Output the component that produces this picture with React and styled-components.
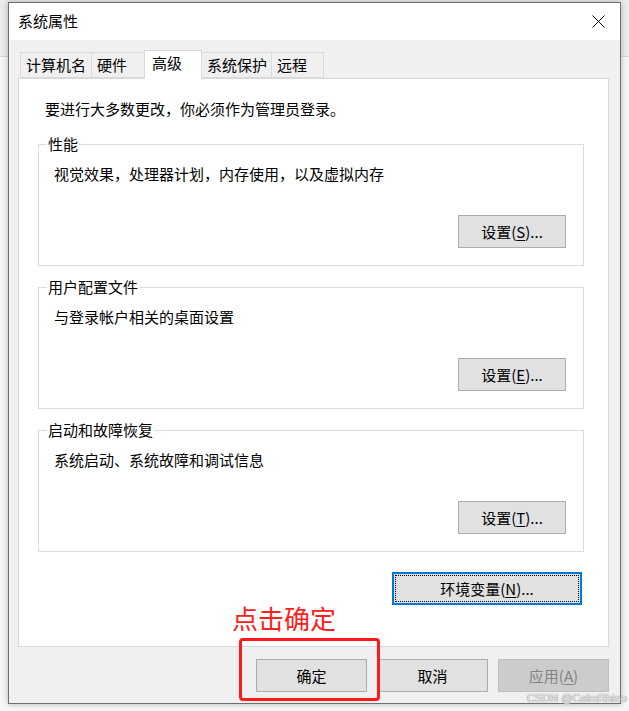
import React from "react";
import styled, { createGlobalStyle } from "styled-components";

const GlobalStyle = createGlobalStyle`
  html, body { margin: 0; padding: 0; }
  body {
    background: linear-gradient(#ececec 0, #ececec 56px, #d8d8d8 56px, #d8d8d8 57px, #f7f7f7 57px);
    font-family: "Noto Sans CJK SC", "Noto Sans", sans-serif;
    color: #000;
  }
`;

const Backdrop = styled.div`
  padding: 2px 8px 7px 8px;
  width: 629px;
  height: 711px;
  box-sizing: border-box;
  position: relative;
  overflow: hidden;
`;

const Window = styled.div`
  position: relative;
  width: 613px;
  height: 702px;
  box-sizing: border-box;
  border: 1px solid #6e6e6e;
  background: #f0f0f0;
  display: flex;
  flex-direction: column;
  box-shadow: 0 0 6px rgba(0, 0, 0, 0.28);
`;

const TitleBar = styled.div`
  height: 37px;
  background: #fff;
  display: flex;
  align-items: center;
  padding-left: 9px;
  flex-shrink: 0;
`;

const Title = styled.div`
  flex: 1;
  font-size: 15px;
  line-height: 20px;
  margin-top: -1px;
`;

const CloseButton = styled.div`
  width: 44px;
  height: 37px;
  display: flex;
  align-items: center;
  justify-content: center;
`;

const Body = styled.div`
  flex: 1;
  display: flex;
  flex-direction: column;
  padding: 10px 11px 0 9px;
`;

const TabStrip = styled.div`
  display: flex;
  align-items: flex-end;
  height: 28px;
  padding-left: 2px;
  position: relative;
  z-index: 2;
`;

const Tab = styled.div`
  box-sizing: border-box;
  width: ${(p) => p.$w}px;
  height: ${(p) => (p.$active ? 29 : 26)}px;
  margin-bottom: ${(p) => (p.$active ? -1 : 0)}px;
  margin-left: ${(p) => (p.$first ? 0 : -1)}px;
  border: 1px solid #d9d9d9;
  border-bottom: ${(p) => (p.$active ? "none" : "1px solid #d9d9d9")};
  background: ${(p) => (p.$active ? "#fff" : "#f0f0f0")};
  position: relative;
  z-index: ${(p) => (p.$active ? 2 : 1)};
  font-size: 15px;
  line-height: 20px;
  padding: ${(p) => (p.$active ? "2px 0 0 7px" : "2px 0 0 5px")};
  white-space: nowrap;
`;

const Panel = styled.div`
  box-sizing: border-box;
  height: 569px;
  background: #fff;
  border: 1px solid #d9d9d9;
  display: flex;
  flex-direction: column;
  padding: 20px 0 0 0;
  position: relative;
  z-index: 1;
`;

const Intro = styled.div`
  font-size: 15px;
  line-height: 20px;
  padding-left: 26px;
`;

const Group = styled.div`
  position: relative;
  box-sizing: border-box;
  width: 546px;
  height: 122px;
  margin: ${(p) => p.$mt}px 0 0 19px;
  border: 1px solid #dcdcdc;
  display: flex;
  flex-direction: column;
  justify-content: space-between;
  padding: 19px 17px 17px 15px;
`;

const GroupLabel = styled.div`
  position: absolute;
  top: -11px;
  left: 8px;
  padding: 0 1px;
  background: #fff;
  font-size: 15px;
  line-height: 20px;
`;

const Description = styled.div`
  font-size: 15px;
  line-height: 20px;
`;

const Button = styled.div`
  box-sizing: border-box;
  width: ${(p) => p.$w}px;
  height: 33px;
  display: flex;
  align-items: center;
  justify-content: center;
  font-size: 15px;
  background: ${(p) => (p.$disabled ? "#cccccc" : "#e1e1e1")};
  color: ${(p) => (p.$disabled ? "#838383" : "#000")};
  border: ${(p) =>
    p.$focused ? "2px solid #0078d7" : p.$disabled ? "1px solid #bfbfbf" : "1px solid #adadad"};
  outline: ${(p) => (p.$focused ? "1px dotted #000" : "none")};
  outline-offset: -4px;
  align-self: ${(p) => (p.$end ? "flex-end" : "auto")};
  flex-shrink: 0;
  u { text-decoration-thickness: 1px; text-underline-offset: 2px; }
`;

const EnvRow = styled.div`
  display: flex;
  justify-content: flex-end;
  margin: 20px 26px 0 0;
`;

const Footer = styled.div`
  display: flex;
  justify-content: flex-end;
  gap: 10px;
  margin-top: 12px;
`;

const Annotation = styled.div`
  position: absolute;
  z-index: 5;
  left: 223px;
  top: 599px;
  color: #ff2020;
  font-size: 26px;
  line-height: 32px;
  white-space: nowrap;
`;

const Highlight = styled.div`
  position: absolute;
  z-index: 5;
  left: 230px;
  top: 635px;
  width: 141px;
  height: 63px;
  box-sizing: border-box;
  border: 3px solid #ff1a1a;
  border-radius: 4px;
`;

const Watermark = styled.div`
  position: absolute;
  z-index: 6;
  left: 527px;
  top: 692px;
  font-family: "Liberation Sans", "Noto Sans", sans-serif;
  font-size: 11px;
  line-height: 13px;
  color: #ececec;
  text-shadow: 0 0 1px #8c8c8c, 0 0 1px #8c8c8c;
  white-space: nowrap;
`;

const tabs = [
  { label: "计算机名", w: 72 },
  { label: "硬件", w: 54 },
  { label: "高级", w: 58, active: true },
  { label: "系统保护", w: 71 },
  { label: "远程", w: 53 },
];

const groups = [
  { label: "性能", text: "视觉效果，处理器计划，内存使用，以及虚拟内存", key: "S", mt: 25 },
  { label: "用户配置文件", text: "与登录帐户相关的桌面设置", key: "E", mt: 21 },
  { label: "启动和故障恢复", text: "系统启动、系统故障和调试信息", key: "T", mt: 21 },
];

export default function App() {
  return (
    <>
      <GlobalStyle />
      <Backdrop>
        <Window>
          <TitleBar>
            <Title>系统属性</Title>
            <CloseButton>
              <svg width="13" height="13" viewBox="0 0 13 13">
                <path d="M0.5 0.5 L12.5 12.5 M12.5 0.5 L0.5 12.5" stroke="#000" strokeWidth="1" />
              </svg>
            </CloseButton>
          </TitleBar>
          <Body>
            <TabStrip>
              {tabs.map((t, i) => (
                <Tab key={t.label} $w={t.w} $active={t.active} $first={i === 0}>
                  {t.label}
                </Tab>
              ))}
            </TabStrip>
            <Panel>
              <Intro>要进行大多数更改，你必须作为管理员登录。</Intro>
              {groups.map((g) => (
                <Group key={g.label} $mt={g.mt}>
                  <GroupLabel>{g.label}</GroupLabel>
                  <Description>{g.text}</Description>
                  <Button $w={108} $end>
                    设置(<u>{g.key}</u>)...
                  </Button>
                </Group>
              ))}
              <EnvRow>
                <Button $w={190} $focused>
                  环境变量(<u>N</u>)...
                </Button>
              </EnvRow>
            </Panel>
            <Footer>
              <Button $w={111}>确定</Button>
              <Button $w={111}>取消</Button>
              <Button $w={111} $disabled>
                应用(<u>A</u>)
              </Button>
            </Footer>
          </Body>
          <Annotation>点击确定</Annotation>
          <Highlight />
        </Window>
        <Watermark>CSDN @CalmRhino</Watermark>
      </Backdrop>
    </>
  );
}
